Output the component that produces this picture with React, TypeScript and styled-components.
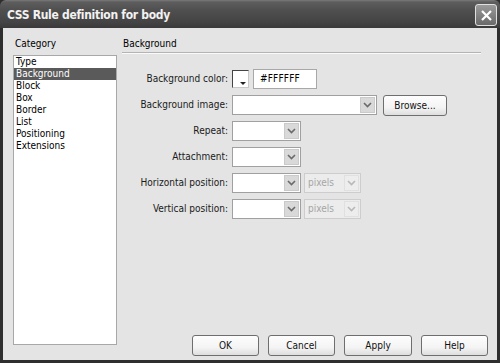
import React, { FC } from 'react'
import styled, { createGlobalStyle, css } from 'styled-components'

const GlobalStyle = createGlobalStyle`
  html, body {
    margin: 0;
    padding: 0;
    background: #2e2e2e;
  }
  body {
    font-family: 'DejaVu Sans Condensed', 'DejaVu Sans', sans-serif;
    font-size: 10px;
    color: #000;
  }
`

const categories = [
  'Type',
  'Background',
  'Block',
  'Box',
  'Border',
  'List',
  'Positioning',
  'Extensions',
]

interface SelectProps {
  width: number
  value?: string
  disabled?: boolean
}

const Select: FC<SelectProps> = ({ width, value = '', disabled = false }) => (
  <SelectBox $width={width} $disabled={disabled}>
    <SelectValue $disabled={disabled}>{value}</SelectValue>
    <SelectArrow $disabled={disabled}>
      <svg width="9" height="6" viewBox="0 0 9 6">
        <path
          d="M1 1 L4.5 4.5 L8 1"
          fill="none"
          stroke={disabled ? '#b8b8b8' : '#6a6a6a'}
          strokeWidth="1.6"
        />
      </svg>
    </SelectArrow>
  </SelectBox>
)

const App: FC = () => {
  return (
    <>
      <GlobalStyle />
      <Window>
        <TitleBar>
          <Title>CSS Rule definition for body</Title>
          <CloseButton>
            <svg width="13" height="13" viewBox="0 0 13 13">
              <path d="M2 2 L11 11 M11 2 L2 11" stroke="#fff" strokeWidth="2.2" />
            </svg>
          </CloseButton>
        </TitleBar>
        <Frame>
          <LeftColumn>
            <SectionLabel>Category</SectionLabel>
            <CategoryList>
              {categories.map((c) => (
                <CategoryItem key={c} $selected={c === 'Background'}>
                  {c}
                </CategoryItem>
              ))}
            </CategoryList>
          </LeftColumn>
          <RightColumn>
            <PanelHeading>Background</PanelHeading>
            <Separator />
            <Form>
              <FieldLabel>Background color:</FieldLabel>
              <FieldControls>
                <Swatch>
                  <SwatchArrow />
                </Swatch>
                <TextInput>#FFFFFF</TextInput>
              </FieldControls>

              <FieldLabel>Background image:</FieldLabel>
              <FieldControls>
                <Select width={145} />
                <Button $width={64} $marginLeft={3}>
                  Browse...
                </Button>
              </FieldControls>

              <FieldLabel>Repeat:</FieldLabel>
              <FieldControls>
                <Select width={69} />
              </FieldControls>

              <FieldLabel>Attachment:</FieldLabel>
              <FieldControls>
                <Select width={69} />
              </FieldControls>

              <FieldLabel>Horizontal position:</FieldLabel>
              <FieldControls>
                <Select width={69} />
                <Select width={57} value="pixels" disabled />
              </FieldControls>

              <FieldLabel>Vertical position:</FieldLabel>
              <FieldControls>
                <Select width={69} />
                <Select width={57} value="pixels" disabled />
              </FieldControls>
            </Form>
            <ButtonRow>
              <Button $width={67}>OK</Button>
              <Button $width={67}>Cancel</Button>
              <Button $width={68}>Apply</Button>
              <Button $width={67}>Help</Button>
            </ButtonRow>
          </RightColumn>
        </Frame>
      </Window>
    </>
  )
}

export default App

const Window = styled.div`
  width: 500px;
  height: 363px;
  display: flex;
  flex-direction: column;
  background: #2e2e2e;
`

const TitleBar = styled.div`
  height: 28px;
  flex: none;
  display: flex;
  align-items: center;
  justify-content: space-between;
  padding: 0 3px 0 7px;
  border-radius: 6px 6px 0 0;
  background: linear-gradient(to bottom, #7a7a7a 0px, #5e5e5e 2px, #4f4f4f 10px, #444 22px, #3a3a3a 28px);
`

const Title = styled.span`
  color: #f2f2f2;
  font-family: 'DejaVu Sans Condensed', 'DejaVu Sans', sans-serif;
  font-weight: bold;
  font-size: 12px;
  letter-spacing: -0.3px;
  margin-top: 1px;
`

const CloseButton = styled.div`
  width: 20px;
  height: 20px;
  margin-top: 2px;
  display: flex;
  align-items: center;
  justify-content: center;
  border: 1px solid #e0e0e0;
  border-radius: 3px;
  background: linear-gradient(to bottom, #9a9a9a, #6a6a6a);
`

const Frame = styled.div`
  flex: 1;
  display: flex;
  margin: 0 3px 3px 3px;
  padding: 9px 9px 4px 10px;
  gap: 5px;
  background: #e4e4e4;
`

const LeftColumn = styled.div`
  width: 104px;
  flex: none;
  display: flex;
  flex-direction: column;
  padding-bottom: 11px;
`

const SectionLabel = styled.div`
  height: 18px;
  line-height: 14px;
  padding-left: 2px;
`

const PanelHeading = styled(SectionLabel)`
  height: 15px;
  padding-left: 1px;
`

const CategoryList = styled.div`
  flex: 1;
  background: #fff;
  border: 1px solid #a8a8a8;
  padding: 0;
`

const CategoryItem = styled.div<{ $selected: boolean }>`
  height: 12px;
  line-height: 12px;
  padding-left: 2px;
  ${({ $selected }) =>
    $selected &&
    css`
      background: #5a5a5a;
      color: #fff;
    `}
`

const RightColumn = styled.div`
  flex: 1;
  display: flex;
  flex-direction: column;
`

const Separator = styled.div`
  height: 0;
  margin-right: 7px;
  border-top: 1px solid #b4b4b4;
  border-bottom: 1px solid #fafafa;
`

const Form = styled.div`
  display: grid;
  grid-template-columns: 106px 1fr;
  grid-auto-rows: 20px;
  column-gap: 4px;
  row-gap: 6px;
  margin-top: 15px;
`

const FieldLabel = styled.div`
  text-align: right;
  line-height: 20px;
  color: #1a1a1a;
`

const FieldControls = styled.div`
  display: flex;
  align-items: center;
  gap: 3px;
`

const Swatch = styled.div`
  position: relative;
  width: 15px;
  height: 16px;
  background: #fff;
  border-top: 1px solid #444;
  border-left: 1px solid #444;
  border-right: 1px solid #c8c8c8;
  border-bottom: 1px solid #c8c8c8;
  margin-right: 1px;
`

const SwatchArrow = styled.div`
  position: absolute;
  right: 2px;
  bottom: 2px;
  width: 0;
  height: 0;
  border-left: 3px solid transparent;
  border-right: 3px solid transparent;
  border-top: 3px solid #222;
`

const TextInput = styled.div`
  width: 56px;
  height: 18px;
  line-height: 18px;
  padding-left: 6px;
  background: #fff;
  border: 1px solid #a8a8a8;
  letter-spacing: 0.2px;
`

const SelectBox = styled.div<{ $width: number; $disabled: boolean }>`
  width: ${({ $width }) => $width}px;
  height: 20px;
  box-sizing: border-box;
  display: flex;
  align-items: stretch;
  border: 1px solid ${({ $disabled }) => ($disabled ? '#cdcdcd' : '#a0a0a0')};
  background: ${({ $disabled }) => ($disabled ? '#ececec' : '#fff')};
  padding: 1px;
`

const SelectValue = styled.div<{ $disabled: boolean }>`
  flex: 1;
  line-height: 16px;
  padding-left: 2px;
  color: ${({ $disabled }) => ($disabled ? '#a6a6a6' : '#000')};
`

const SelectArrow = styled.div<{ $disabled: boolean }>`
  width: 15px;
  display: flex;
  align-items: center;
  justify-content: center;
  background: ${({ $disabled }) => ($disabled ? '#ededed' : '#d9d9d9')};
  border: 1px solid ${({ $disabled }) => ($disabled ? '#e0e0e0' : '#cacaca')};
  box-sizing: border-box;
`

const Button = styled.div<{ $width: number; $marginLeft?: number }>`
  width: ${({ $width }) => $width}px;
  height: 21px;
  box-sizing: border-box;
  margin-left: ${({ $marginLeft = 0 }) => $marginLeft}px;
  display: flex;
  align-items: center;
  justify-content: center;
  border: 1px solid #6e6e6e;
  border-radius: 3px;
  background: linear-gradient(to bottom, #fdfdfd 0%, #f4f4f4 60%, #dedede 100%);
  color: #111;
`

const ButtonRow = styled.div`
  margin-top: auto;
  display: flex;
  justify-content: flex-end;
  gap: 9px;
`
